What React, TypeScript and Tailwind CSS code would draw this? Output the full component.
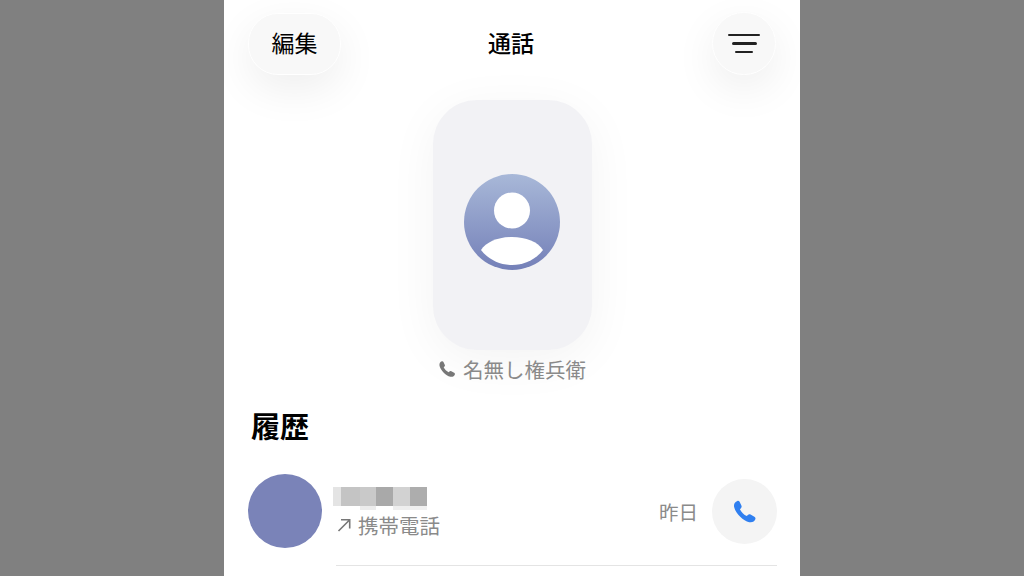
import React from 'react';

const font = { fontFamily: '"Noto Sans CJK JP", "Noto Sans", sans-serif' };

const PhoneIcon = ({ className }: { className?: string }) => (
  <svg viewBox="0 0 24 24" className={className} fill="currentColor">
    <path d="M5.200 1.800C3 2.600 1.500 4.500 2 7.500 3 13 10.500 21 16.500 22.200c3 .6 5.100-.7 5.900-2.700.4-1.100 0-2-.9-2.500l-3.700-2c-.9-.5-1.900-.3-2.600.4l-1 1c-2.700-1.200-5.400-3.900-6.600-6.600l1-1c.7-.7.9-1.700.4-2.600L7.300 2.700c-.4-.8-1.300-1.200-2.100-.9z" />
  </svg>
);

// mosaic over the caller's name
const blurCells = [
  'w-[8px] bg-[#e4e4e4]',
  'w-[19px] bg-[#c4c4c4]',
  'w-[16px] bg-[#c9c9c9]',
  'w-[17px] bg-[#a9a9a9]',
  'w-[17px] bg-[#d2d2d2]',
  'w-[17px] bg-[#adadad]',
];
const blurTail = [
  'w-[8px]',
  'w-[19px]',
  'w-[16px] bg-[#ececec]',
  'w-[17px]',
  'w-[17px] bg-[#eeeeee]',
  'w-[17px] bg-[#f0f0f0]',
];

export default function App() {
  return (
    <div className="flex h-[576px] w-full justify-center overflow-hidden bg-[#808080]" style={font}>
      <div className="flex h-full w-[576px] flex-col overflow-hidden bg-white">
        {/* header */}
        <div className="grid grid-cols-[1fr_auto_1fr] items-start px-6 pt-[12px]">
          <button className="mt-px flex h-[62px] w-[93px] items-center justify-center rounded-[30px] border border-white bg-[#f8f8f8] pb-[4px] text-[23px] text-black shadow-[0_14px_44px_rgba(0,0,0,0.07)]">
            編集
          </button>
          <h1 className="mt-[11px] ml-[-2px] text-[23px] leading-[38px] font-medium text-black">通話</h1>
          <button className="flex h-[63px] w-[64px] flex-col items-center justify-center gap-[6px] justify-self-end rounded-full border border-white bg-[#f8f8f8] shadow-[0_14px_44px_rgba(0,0,0,0.07)]">
            <span className="block h-[2.500px] w-[32px] rounded-full bg-[#222]" />
            <span className="block h-[2.500px] w-[25px] rounded-full bg-[#222]" />
            <span className="block h-[2.500px] w-[18px] rounded-full bg-[#222]" />
          </button>
        </div>

        {/* favourite card */}
        <div className="mt-[25px] flex flex-col items-center">
          <div className="flex h-[250px] w-[159px] items-center justify-center rounded-[44px] bg-[#f2f2f5] pb-[6px] shadow-[0_10px_50px_rgba(0,0,0,0.05)]">
            <svg viewBox="0 0 96 96" className="h-[96px] w-[96px]">
              <defs>
                <linearGradient id="av" x1="0" y1="0" x2="0" y2="1">
                  <stop offset="0" stopColor="#a8b8d8" />
                  <stop offset="1" stopColor="#7480b8" />
                </linearGradient>
              </defs>
              <circle cx="48" cy="48" r="48" fill="url(#av)" />
              <circle cx="48" cy="36.500" r="18" fill="#fff" />
              <path d="M17 76C22 68 34 63 48 63s26 5 31 13c-7 9-18 15-31 15s-24-6-31-15z" fill="#fff" />
            </svg>
          </div>
          <div className="mt-[5px] flex items-center gap-[7px] text-[20.500px] leading-[28px] text-[#8a8a8a]">
            <PhoneIcon className="h-[18px] w-[18px] text-[#777]" />
            <span>名無し権兵衛</span>
          </div>
        </div>

        {/* history */}
        <h2 className="mt-[22px] pl-[27px] text-[29px] leading-[40px] font-bold text-black">履歴</h2>
        <div className="mt-[29px] flex items-start pl-6 pr-[23px]">
          <div className="h-[74px] w-[74px] shrink-0 rounded-full bg-[#7a83b8]" />
          <div className="ml-[11px] flex min-w-0 flex-1 flex-col">
            <div className="flex items-start justify-between">
              <div className="pt-[13px]">
                <div className="blur-[0.5px]">
                  <div className="flex h-[19px]">
                    {blurCells.map((c, i) => (
                      <div key={i} className={`h-full ${c}`} />
                    ))}
                  </div>
                  <div className="flex h-[4px]">
                    {blurTail.map((c, i) => (
                      <div key={i} className={`h-full ${c}`} />
                    ))}
                  </div>
                </div>
                <div className="mt-[1px] flex items-center gap-[6px] text-[20.500px] leading-[28px] text-[#8a8a8a]">
                  <svg viewBox="0 0 16 16" className="ml-[3px] h-[16px] w-[16px]" fill="none" stroke="#777" strokeWidth="1.6">
                    <path d="M2.500 14L13.500 3M5 2.800h8.700v8.700" />
                  </svg>
                  <span>携帯電話</span>
                </div>
              </div>
              <div className="flex items-center gap-[14px] pt-[5px]">
                <span className="text-[19.500px] text-[#8a8a8a]">昨日</span>
                <div className="flex h-[65px] w-[65px] items-center justify-center rounded-full bg-[#f4f4f4]">
                  <PhoneIcon className="h-[25px] w-[25px] text-[#2f7ff0]" />
                </div>
              </div>
            </div>
            <div className="mt-[21px] ml-[3px] h-px bg-[#e4e4e4]" />
          </div>
        </div>
      </div>
    </div>
  );
}
